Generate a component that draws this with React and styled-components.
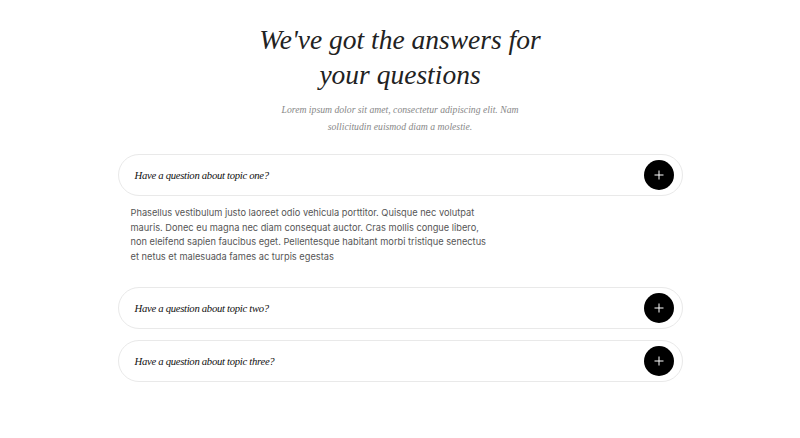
import { useState } from 'react';
import styled, { createGlobalStyle } from 'styled-components';

const GlobalStyle = createGlobalStyle`
  body {
    margin: 0;
    background: #ffffff;
  }
`;

const Page = styled.main`
  width: 100%;
  display: flex;
  flex-direction: column;
  align-items: center;
  padding-top: 22px;
`;

const Title = styled.h1`
  margin: 0;
  font-family: 'Liberation Serif', 'Times New Roman', serif;
  font-style: italic;
  font-weight: 400;
  font-size: 27.5px;
  line-height: 35px;
  color: #222;
  text-align: center;
`;

const Subtitle = styled.p`
  margin: 9px 0 0;
  font-family: 'Liberation Serif', 'Times New Roman', serif;
  font-style: italic;
  font-size: 9.7px;
  line-height: 17px;
  color: #888;
  text-align: center;
  width: 245px;
`;

const List = styled.section`
  width: 565px;
  margin-top: 19px;
  display: flex;
  flex-direction: column;
  gap: 11px;
`;

const Item = styled.div`
  display: flex;
  flex-direction: column;
`;

const Question = styled.div`
  height: 42px;
  box-sizing: border-box;
  border: 1px solid #e9e9e9;
  border-radius: 21px;
  display: flex;
  align-items: center;
  justify-content: space-between;
  padding: 0 8px 0 16px;
  cursor: pointer;
`;

const QuestionText = styled.span`
  font-family: 'Liberation Serif', 'Times New Roman', serif;
  font-style: italic;
  font-size: 10.7px;
  letter-spacing: -0.3px;
  color: #111;
`;

const PlusButton = styled.button`
  width: 30px;
  height: 30px;
  border-radius: 50%;
  border: none;
  background: #000;
  padding: 0;
  display: flex;
  align-items: center;
  justify-content: center;
  cursor: pointer;
`;

const Answer = styled.p`
  margin: 0;
  padding: 10px 13px 12px;
  max-width: 362px;
  font-family: Inter, 'Noto Sans', sans-serif;
  font-size: 9.25px;
  line-height: 14.5px;
  color: #555;
`;

const faqs = [
  {
    q: 'Have a question about topic one?',
    a: 'Phasellus vestibulum justo laoreet odio vehicula porttitor. Quisque nec volutpat mauris. Donec eu magna nec diam consequat auctor. Cras mollis congue libero, non eleifend sapien faucibus eget. Pellentesque habitant morbi tristique senectus et netus et malesuada fames ac turpis egestas',
  },
  {
    q: 'Have a question about topic two?',
    a: 'Phasellus vestibulum justo laoreet odio vehicula porttitor. Quisque nec volutpat mauris.',
  },
  {
    q: 'Have a question about topic three?',
    a: 'Phasellus vestibulum justo laoreet odio vehicula porttitor. Quisque nec volutpat mauris.',
  },
];

const Plus = () => (
  <svg width="10" height="10" viewBox="0 0 10 10">
    <path d="M5 0.5v9M0.5 5h9" stroke="#fff" strokeWidth="1" />
  </svg>
);

const App = () => {
  const [open, setOpen] = useState(0);

  return (
    <>
      <GlobalStyle />
      <Page>
        <Title>
          We've got the answers for
          <br />
          your questions
        </Title>
        <Subtitle>
          Lorem ipsum dolor sit amet, consectetur adipiscing elit. Nam
          sollicitudin euismod diam a molestie.
        </Subtitle>
        <List>
          {faqs.map((f, i) => (
            <Item key={f.q}>
              <Question onClick={() => setOpen(open === i ? -1 : i)}>
                <QuestionText>{f.q}</QuestionText>
                <PlusButton aria-label="toggle">
                  <Plus />
                </PlusButton>
              </Question>
              {open === i && <Answer>{f.a}</Answer>}
            </Item>
          ))}
        </List>
      </Page>
    </>
  );
};

export default App;
